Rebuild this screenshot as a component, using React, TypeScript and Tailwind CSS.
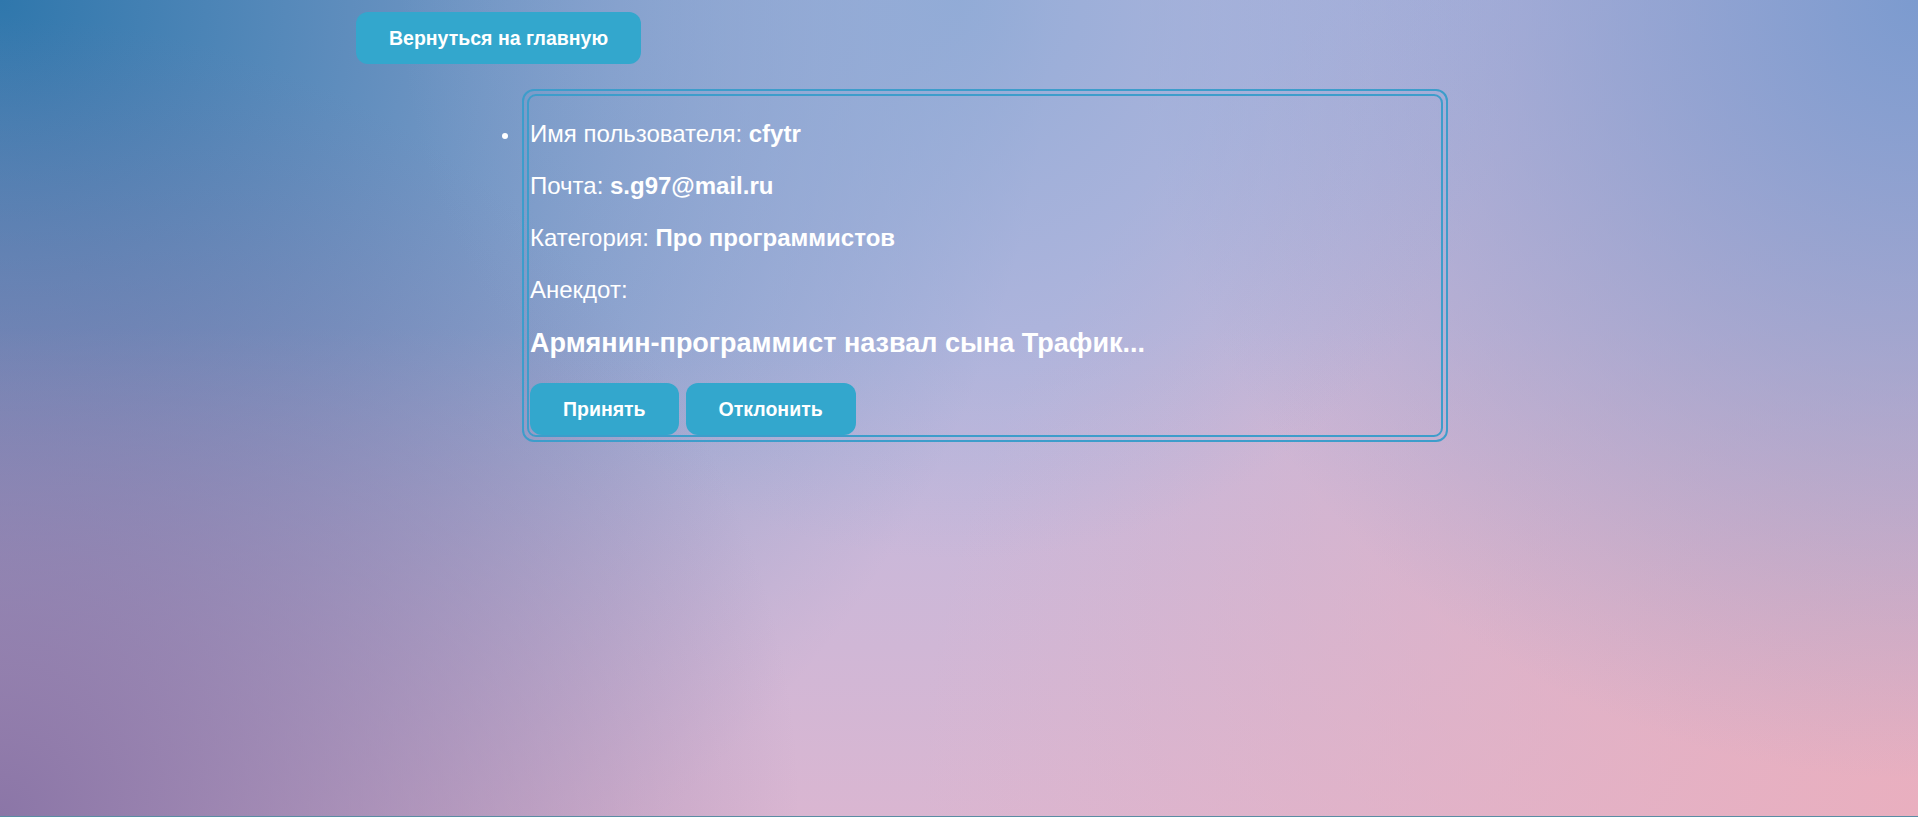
import React from "react";

export default function App() {
  return (
    <div className="relative w-full h-[817px] overflow-hidden font-['Liberation_Sans',Arial,sans-serif] text-white leading-[normal] border-b border-[#5a8ca4] bg-[#beb9df] bg-[image:radial-gradient(circle_560px_at_50%_0%,rgba(140,170,214,0.85)_0%,rgba(140,170,214,0)_100%),radial-gradient(circle_780px_at_100%_0%,#7c9bcf_0%,rgba(124,155,207,0)_100%),radial-gradient(circle_1000px_at_100%_100%,#e9afbf_0%,rgba(233,175,191,0)_100%),radial-gradient(circle_800px_at_0%_100%,#8b76a7_0%,rgba(139,118,167,0)_100%),linear-gradient(to_top,rgba(236,180,200,0.6)_0%,rgba(236,180,200,0)_60%),radial-gradient(circle_1050px_at_0%_0%,#2f77ac_0%,rgba(47,119,172,0)_100%)]">
      <div className="pt-[12px] pl-[356px]">
        <button className="h-[52px] px-[33px] rounded-[12px] bg-[#33a7cd] text-white font-bold text-[19.5px] leading-[normal]">
          Вернуться на главную
        </button>

        <div className="flex mt-[25px] ml-[134px]">
          <div className="w-[32px] shrink-0">
            <div className="w-[6px] h-[6px] rounded-full bg-white mt-[44px] ml-[12px]" />
          </div>
          <div className="w-[926px] border-2 border-[#3d9dcb] rounded-[12px] p-[3px]">
            <div className="border-2 border-[#3d9dcb] rounded-[9px] pt-[24px] pl-[1px] flex flex-col gap-[24px] text-[24px]">
              <p>
                Имя пользователя: <span className="font-bold">cfytr</span>
              </p>
              <p>
                Почта: <span className="font-bold">s.g97@mail.ru</span>
              </p>
              <p>
                Категория: <span className="font-bold">Про программистов</span>
              </p>
              <p>Анекдот:</p>
              <h3 className="text-[27px] font-bold">Армянин-программист назвал сына Трафик...</h3>
              <div className="flex gap-[7px]">
                <button className="h-[52px] px-[33px] rounded-[12px] bg-[#33a7cd] text-white font-bold text-[19.5px] leading-[normal]">
                  Принять
                </button>
                <button className="h-[52px] px-[33px] rounded-[12px] bg-[#33a7cd] text-white font-bold text-[19.5px] leading-[normal]">
                  Отклонить
                </button>
              </div>
            </div>
          </div>
        </div>
      </div>
    </div>
  );
}
